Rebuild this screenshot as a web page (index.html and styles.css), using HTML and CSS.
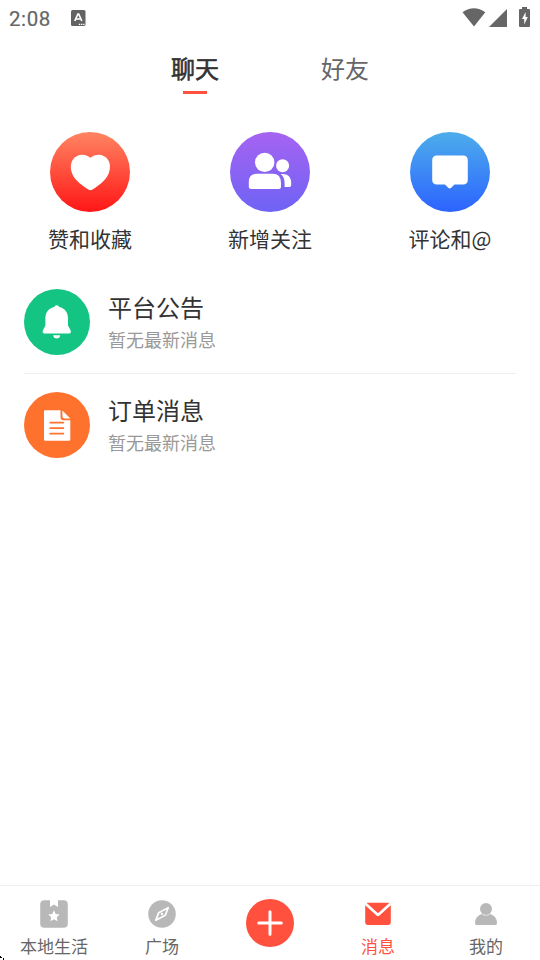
FILE: index.html
```html
<!DOCTYPE html>
<html lang="zh-CN">
<head>
<meta charset="utf-8">
<title>消息</title>
<link rel="stylesheet" href="styles.css">
</head>
<body>
<div class="screen">
  <header class="status">
    <span class="time">2:08</span>
    <svg class="ime" width="15" height="16" viewBox="0 0 15 16"><rect width="14.5" height="16" rx="1.5" fill="#636363"/><path d="M3.8 11 6.9 4h.8l3.1 7M5 9h4.5" fill="none" stroke="#fff" stroke-width="1.7"/><path d="M7.8 14.3h1.4m.8 0h1.4m.8 0h1.4" stroke="#fff" stroke-width="1.2"/></svg>
    <svg class="signals" width="70" height="22" viewBox="462 6 70 22" fill="#666"><path d="M462.500 12.300Q473.800 4.200 485.300 12.300L474 26.600Z"/><path d="M507 9v18h-18Z"/><path d="M522 7h5v2h2q1 0 1 1v16q0 1-1 1h-9q-1 0-1-1V10q0-1 1-1h2Z"/><path d="M525.600 12v5h2.200l-3.600 7.500V19H522Z" fill="#fff"/></svg>
  </header>
  <nav class="tabs">
    <a class="tab active">聊天</a>
    <a class="tab">好友</a>
  </nav>
  <section class="shortcuts">
    <div class="shortcut">
      <svg class="disc likes" viewBox="0 0 80 80"><path d="M40.400 25.800C34.500 20.900 26 22.300 22.500 28.300C18.700 35 21.800 43.500 26.800 48.600C30.300 52.200 34.800 55.500 38.300 57.600Q40.400 58.900 42.500 57.600C46 55.500 50.500 52.200 54 48.600C59 43.500 62.100 35 58.300 28.300C54.800 22.300 46.300 20.900 40.400 25.800Z" fill="#fff"/></svg>
      <span>赞和收藏</span>
    </div>
    <div class="shortcut">
      <svg class="disc follows" viewBox="0 0 80 80" fill="#fff"><circle cx="34.700" cy="30.400" r="9.700"/><circle cx="52.600" cy="33.700" r="6.500"/><path d="M27 41.700h15.500q8.500 0 8.500 9.300v3.500q0 2.500-2.500 2.500H21.300q-2.500 0-2.500-2.500V50q0-8.300 8.200-8.300Z"/><path d="M50.800 42.200C57 41.300 61.200 44.500 61.200 50.500v2q0 2.600-2.600 2.600h-4V51Q54.600 45 50.800 42.200Z"/></svg>
      <span>新增关注</span>
    </div>
    <div class="shortcut">
      <svg class="disc comments" viewBox="0 0 80 80"><path d="M27 23.500h26q4.800 0 4.800 4.800v19.500q0 4.800-4.800 4.800h-8.500l-3.300 3.200q-1.500 1.300-3 0l-3.300-3.200H27q-4.800 0-4.800-4.800V28.300q0-4.800 4.800-4.800Z" fill="#fff"/></svg>
      <span>评论和@</span>
    </div>
  </section>
  <main class="list">
    <article class="row">
      <svg class="avatar notice" viewBox="0 0 66 66" fill="#fff"><path d="M30.300 18.100Q30.500 16.200 32.700 16.200T35.100 18.100C41 19.300 44 23.700 44 29.500V36.500L46.300 40.800Q48 44.500 44.800 44.500H20.600Q17.500 44.500 19.200 40.800L21.400 36.500V29.500C21.400 23.700 24.500 19.300 30.300 18.100Z"/><path d="M29.200 46.200h7q-.5 3.300-3.500 3.300t-3.500-3.300Z"/></svg>
      <div class="copy"><h2>平台公告</h2><p>暂无最新消息</p></div>
    </article>
    <article class="row">
      <svg class="avatar orders" viewBox="0 0 66 66"><path d="M21 18.200h15.500V25q0 3.200 3.200 3.200h6.600V47.500q0 1.200-1.200 1.200H21.200q-1.200 0-1.200-1.200V19.200q0-1 1-1Z" fill="#fff"/><path d="M38.400 18.500l7.900 8H41Q38.400 26.500 38.400 24Z" fill="#fff"/><path d="M26.200 30.600h13.200M26.200 36.200h13.200M26.200 41.700h13.200" stroke="#ff722d" stroke-width="1.700" stroke-linecap="round"/></svg>
      <div class="copy"><h2>订单消息</h2><p>暂无最新消息</p></div>
    </article>
  </main>
  <footer class="bar">
    <a class="item">
      <svg width="30" height="30" viewBox="0 0 30 30"><path d="M5.500 1.200H11V8l4-2.600L19 8V1.200h5.500q4.300 0 4.300 4.300v19q0 4.300-4.300 4.300h-19q-4.300 0-4.300-4.300v-19q0-4.300 4.300-4.300Z" fill="#b8b8b8"/><path d="m15 11.300 1.700 3.600 4 .5-2.900 2.800.7 4-3.500-1.900-3.500 1.900.7-4-2.900-2.800 4-.5Z" fill="#fff"/></svg>
      <span>本地生活</span>
    </a>
    <a class="item">
      <svg width="30" height="30" viewBox="0 0 30 30"><circle cx="15" cy="15" r="13.800" fill="#b8b8b8"/><path d="M21.200 8.800 18.300 16.300 8.800 21.200 11.700 13.700Z" fill="none" stroke="#fff" stroke-width="1.800" stroke-linejoin="round"/><circle cx="15" cy="15" r="1.200" fill="#fff"/></svg>
      <span>广场</span>
    </a>
    <a class="item publish">
      <svg width="48" height="48" viewBox="0 0 48 48"><circle cx="24" cy="24" r="24" fill="#ff513e"/><path d="M12.700 24h22.600M24 12.700v22.600" stroke="#fff" stroke-width="3" stroke-linecap="round"/></svg>
    </a>
    <a class="item current">
      <svg width="30" height="30" viewBox="0 0 30 30"><path d="M3.500 3.800h23L15.900 13.600q-.9.800-1.800 0ZM2.200 6.200 13.500 16.600q1.500 1.300 3 0L27.800 6.200V23.500q0 2.400-2.400 2.400H4.600q-2.400 0-2.400-2.400Z" fill="#ff513e"/></svg>
      <span>消息</span>
    </a>
    <a class="item">
      <svg width="30" height="30" viewBox="0 0 30 30" fill="#b8b8b8"><circle cx="15" cy="10" r="6"/><path d="M10.700 15Q15 18 19.300 15Q26 17.300 26 24q0 1.900-1.300 1.900H5.300Q4 25.900 4 24Q4 17.300 10.700 15Z"/></svg>
      <span>我的</span>
    </a>
  </footer>
  <svg class="corner" width="5" height="5" viewBox="0 0 5 5" shape-rendering="crispEdges"><path d="M0 1h1v1h1v1H0ZM3 3h1v2H3Z"/></svg>
</div>
</body>
</html>
```
FILE: styles.css
```css
* { box-sizing: border-box; }
body { margin: 0; background: #fff; }
.screen {
  position: relative;
  display: flex;
  flex-direction: column;
  width: 540px;
  height: 960px;
  overflow: hidden;
  color: #333;
  font-family: "Noto Sans CJK SC", sans-serif;
}
.status {
  display: flex;
  align-items: flex-start;
  height: 40px;
  padding: 6px 8px 0 9px;
}
.time {
  width: 62px;
  padding-top: 1px;
  color: #666;
  font: 400 20.5px/24px Roboto, sans-serif;
  letter-spacing: .6px;
  -webkit-text-stroke: .2px #666;
}
.ime { margin-top: 4px; }
.signals { margin-left: auto; }
.tabs {
  display: flex;
  justify-content: center;
  gap: 102px;
  height: 60px;
}
.tab {
  display: flex;
  flex-direction: column;
  align-items: center;
  padding-top: 10px;
  color: #666;
  font-size: 24px;
  line-height: 36px;
}
.tab.active { color: #333; -webkit-text-stroke: .6px #333; }
.tab.active::after {
  width: 24px;
  height: 3px;
  margin-top: 5px;
  background: #ff513e;
  content: "";
}
.shortcuts {
  display: grid;
  grid-template-columns: repeat(3, 1fr);
  height: 171px;
  padding-top: 32px;
}
.shortcut {
  display: flex;
  flex-direction: column;
  align-items: center;
  gap: 11px;
  font-size: 21px;
  line-height: 31px;
}
.disc { width: 80px; height: 80px; border-radius: 50%; }
.likes { background: linear-gradient(#ff8562, #ff1616); }
.follows { background: linear-gradient(#a663f1, #6e63f5); }
.comments { background: linear-gradient(#4dadeb, #2c63ff); }
.list { flex: 1; padding: 0 24px; }
.row {
  display: flex;
  gap: 18px;
  height: 103px;
  padding-top: 18px;
}
.row:first-child { border-bottom: 1px solid #eee; }
.avatar { width: 66px; height: 66px; border-radius: 50%; }
.notice { background: #14c483; }
.orders { background: #ff722d; }
.copy h2 {
  margin: 0;
  font-size: 24px;
  font-weight: 400;
  line-height: 36px;
}
.copy p {
  margin: 1px 0 0;
  color: #999;
  font-size: 18px;
  line-height: 27px;
}
.bar {
  display: grid;
  grid-template-columns: repeat(5, 1fr);
  height: 75px;
  border-top: 1px solid #eee;
}
.item {
  display: flex;
  flex-direction: column;
  align-items: center;
  gap: 4px;
  padding-top: 13px;
  color: #666;
  font-size: 17px;
  line-height: 25px;
}
.item.current { color: #ff513e; }
.corner { position: absolute; bottom: 0; left: 0; }
```
